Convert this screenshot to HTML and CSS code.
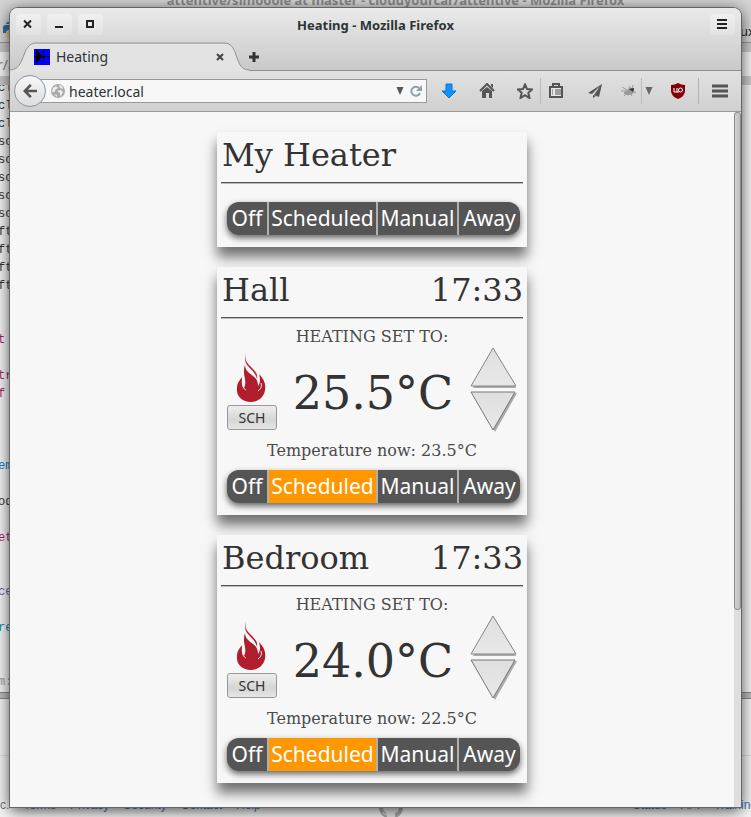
FILE: index.html
```html
<!DOCTYPE html>
<html lang="en">
<head>
<meta charset="utf-8">
<title>Heating</title>
<link rel="stylesheet" href="styles.css">
</head>
<body>
<svg class="defs" aria-hidden="true">
  <defs>
    <linearGradient id="tri" x1="0" y1="0" x2="0" y2="1"><stop offset="0" stop-color="#dfdfdf"/><stop offset="1" stop-color="#e8e8e8"/></linearGradient>
    <symbol id="flame" viewBox="0 0 30 49">
      <path fill="#b01e2e" d="M10 0C8 7 11 10 15 14C19 18 22 21 21 26C20 20 15 17 12 13C9 10 8 5 10 0Z"/>
      <path fill="#b01e2e" d="M9 12C9 17 13 20 17 23C21 26 22 29 22 33C25 29 24 25 23 21C28 26 30 31 29 37C28 45 21 49 15 49C6 49 0 43 1 35C1 30 4 27 6 24C6 29 5 32 8 35C11 29 8 24 8 20C8 17 8 14 9 12Z"/>
      <path fill="none" stroke="#f7f7f7" stroke-width="1" d="M7 29C6 34 8 36 10 37M25 30C26 33 25 36 22 38"/>
    </symbol>
    <symbol id="arrow-up" viewBox="0 0 48 41">
      <path d="M25 3L47 41H4Z" fill="#aaa"/><path d="M24 1L47 39H2Z" fill="url(#tri)" stroke="#858585"/>
    </symbol>
    <symbol id="arrow-down" viewBox="0 0 48 41">
      <path d="M4 2H48L26 41Z" fill="#aaa"/><path d="M2 1H46L24 39Z" fill="url(#tri)" stroke="#777"/>
    </symbol>
  </defs>
</svg>

<div class="backdrop" aria-hidden="true">
  <div class="back-title">attentive/simooole at master - cloudyourcar/attentive - Mozilla Firefox</div>
  <div class="back-tabs">
    <svg class="python" viewBox="0 0 16 16"><path fill="#3670a0" d="M4 0h7q2 0 2 2v6H6q-3 0-3 3H0V5q0-2 3-2h5V2H3z"/><path fill="#f2c63c" d="M16 5v6q0 2-3 2H8v3H6q-2 0-2-2v-3q0-2 2-2h7V5z"/></svg>
    <span>ux</span>
  </div>
  <div class="back-bar"><span>r/a</span></div>
  <div class="back-code">
    <pre>cl
cl
cl
sc
sc
sc
sc
sc
ft
ft
ft
ft


<b class="pink">t</b>

<b class="pink">tr</b>
<b class="pink">f</b>



<b class="blue">em</b>

od

<b class="pink">et</b>


<b class="violet">ce</b>

<b class="blue">re</b>


<b class="grey">m:</b></pre>
  </div>
  <div class="back-edge"></div>
  <div class="back-page"></div>
  <div class="back-footer">
    <div><span>c.</span><a>Terms</a><a>Privacy</a><a>Security</a><a>Contact</a><a>Help</a></div>
    <svg class="octo" viewBox="0 0 24 24"><circle cx="12" cy="12" r="12" fill="#aaa"/><path fill="#e6e6e6" d="M8 24v-4q-3 1-5-3 2 0 3 2l2-1q-4-1-4-6 0-2 1-3V5l4 2h6l4-2v4q1 1 1 3 0 5-4 6v6z"/></svg>
    <div><a>Status</a><a>API</a><a>Training</a></div>
  </div>
</div>

<div class="window">
  <header class="chrome">
    <div class="titlebar">
      <div class="controls">
        <button aria-label="Close"><svg viewBox="0 0 25 21"><path d="M8 6.500l7 7M15 6.500l-7 7" stroke="#222" stroke-width="2"/></svg></button>
        <button aria-label="Minimize"><svg viewBox="0 0 25 21"><path d="M8 13h8" stroke="#222" stroke-width="2"/></svg></button>
        <button aria-label="Maximize"><svg viewBox="0 0 25 21"><path d="M9 7h6v6H9z" fill="none" stroke="#222" stroke-width="2"/></svg></button>
      </div>
      <h1>Heating - Mozilla Firefox</h1>
      <div class="controls end">
        <button aria-label="Window menu"><svg viewBox="0 0 25 21"><path d="M7 6h10M7 10h10M7 14h10" stroke="#222" stroke-width="2"/></svg></button>
      </div>
    </div>
    <div class="tabs">
      <div class="tab">
        <svg class="tab-shape" viewBox="0 0 240 29"><path d="M0 28C16 28 11 1 26 1H215C231 1 224 28 240 28V29H0Z" fill="#e3e3e3"/><path d="M0 28C16 28 11 1 26 1H215C231 1 224 28 240 28" fill="none" stroke="#8e8e8e"/></svg>
        <svg class="favicon" viewBox="0 0 16 16"><path fill="#00f" d="M0 0h16v16H0z"/><path d="M2 1l7 6.500L2 14zM0 7h16v1H0zM9 2h1v11H9z"/></svg>
        <span>Heating</span>
        <button aria-label="Close tab"><svg viewBox="0 0 8 8"><path d="M1 1l6 6M7 1L1 7" stroke="#444" stroke-width="2"/></svg></button>
      </div>
      <button class="new-tab" aria-label="New tab"><svg viewBox="0 0 10 10"><path d="M5 0v10M0 5h10" stroke="#333" stroke-width="3"/></svg></button>
    </div>
  </header>
  <nav class="toolbar">
    <button class="back" aria-label="Back"><svg viewBox="0 0 16 16"><path d="M16 8H3M9 1L2 8l7 7" fill="none" stroke="#555" stroke-width="3"/></svg></button>
    <div class="urlbar">
      <svg class="i14" viewBox="0 0 14 14"><circle cx="7" cy="7" r="7" fill="#aaa"/><path fill="#eee" d="M2 4l3-2 2 2-3 2v2L1 8zM8 1l3 1 1 3-3-1zM6 7l4-1 2 2-2 4-1-1V9zM3 10l3 1v2z"/></svg>
      <input aria-label="Address" value="heater.local">
      <svg class="drop" viewBox="0 0 8 8"><path d="M.5 0h7L4 8z" fill="#555"/></svg>
      <svg class="i12" viewBox="0 0 12 12"><path d="M10 8A4.500 4.500 0 1 1 9 3" fill="none" stroke="#91a0ab" stroke-width="2"/><path d="M12 0v6H6z" fill="#91a0ab"/></svg>
    </div>
    <div class="tools">
      <button aria-label="Downloads"><svg viewBox="0 0 16 16"><path d="M5 1h6v7h4l-7 7-7-7h4z" fill="#1292ff" stroke="#0872d3"/></svg></button>
      <button aria-label="Home"><svg viewBox="0 0 16 16"><path d="M1 8l7-7 7 7" fill="none" stroke="#555" stroke-width="2"/><path d="M3 8l5-4 5 4v7h-3v-5H7v5H3zM12 1h2v4l-2-2z" fill="#555"/></svg></button>
      <button class="star" aria-label="Bookmark"><svg viewBox="0 0 16 16"><path d="M8 1.500l2 4.500 5 .5-3.700 3.300L12.500 15 8 12.200 3.500 15l1.200-5.200L1 6.500 6 6z" fill="none" stroke="#555" stroke-width="2"/></svg></button>
      <button class="list" aria-label="Bookmarks menu"><svg viewBox="0 0 16 16"><path d="M2 4h12v10H2z" fill="#e8e8e8" stroke="#555" stroke-width="2"/><path d="M5 3V1h6v2" fill="none" stroke="#555" stroke-width="2"/><path d="M4 7h1M7 7h6M4 9h1M7 9h6M4 11h1M7 11h6" stroke="#555"/></svg></button>
      <button class="plane" aria-label="Share"><svg viewBox="0 0 16 16"><path d="M15 1L1 10l4 1 8-8-6 9 5 2zM6 12v3l3-2z" fill="#555"/></svg></button>
      <button class="bug" aria-label="Firebug"><svg viewBox="0 0 16 16"><path d="M3 10l6-5 4 1-1 4-5 2zM1 4l5 3M0 8h5M3 13l4-4M8 3l2 4M12 2l-1 4M11 8l4 2M9 9l2 4" fill="#999" stroke="#999"/><path d="M8 6l5-1-1 4z" fill="#333"/></svg></button>
      <button class="bug-drop" aria-label="Firebug menu"><svg viewBox="0 0 8 8"><path d="M.5 0h7L4 8z" fill="#666"/></svg></button>
      <button class="shield" aria-label="uBlock"><svg viewBox="0 0 16 16"><path d="M8 0q3 2 7 2v6q0 5-7 8-7-3-7-8V2q4 0 7-2z" fill="#810007"/><path d="M4 5v4h3V5M7 9h2" fill="none" stroke="#fff"/><circle cx="10.500" cy="7" r="2" fill="none" stroke="#fff"/></svg></button>
      <button class="menu" aria-label="Open menu"><svg viewBox="0 0 16 16"><path d="M0 3h16M0 8h16M0 13h16" stroke="#555" stroke-width="3"/></svg></button>
    </div>
  </nav>

  <div class="viewport">
    <main>
      <section class="card">
        <h2>My Heater</h2>
        <div class="modes spaced"><button>Off</button><button>Scheduled</button><button>Manual</button><button>Away</button></div>
      </section>
      <section class="card">
        <h2>Hall <time>17:33</time></h2>
        <p class="label">HEATING SET TO:</p>
        <div class="setting">
          <div class="status"><svg viewBox="0 0 30 49"><use href="#flame"/></svg><button>SCH</button></div>
          <output>25.5°C</output>
          <div class="steps"><button aria-label="Warmer"><svg viewBox="0 0 48 41"><use href="#arrow-up"/></svg></button><button aria-label="Cooler"><svg viewBox="0 0 48 41"><use href="#arrow-down"/></svg></button></div>
        </div>
        <p class="now">Temperature now: 23.5°C</p>
        <div class="modes"><button>Off</button><button class="on">Scheduled</button><button>Manual</button><button>Away</button></div>
      </section>
      <section class="card">
        <h2>Bedroom <time>17:33</time></h2>
        <p class="label">HEATING SET TO:</p>
        <div class="setting">
          <div class="status"><svg viewBox="0 0 30 49"><use href="#flame"/></svg><button>SCH</button></div>
          <output>24.0°C</output>
          <div class="steps"><button aria-label="Warmer"><svg viewBox="0 0 48 41"><use href="#arrow-up"/></svg></button><button aria-label="Cooler"><svg viewBox="0 0 48 41"><use href="#arrow-down"/></svg></button></div>
        </div>
        <p class="now">Temperature now: 22.5°C</p>
        <div class="modes"><button>Off</button><button class="on">Scheduled</button><button>Manual</button><button>Away</button></div>
      </section>
    </main>
    <div class="scroll"><div class="thumb"></div></div>
  </div>
</div>
</body>
</html>
```
FILE: styles.css
```css
* { box-sizing: border-box; }
body {
  margin: 0;
  padding: 8px 10px 10px;
  min-height: 100vh;
  position: relative;
  display: flex;
  font-family: "Noto Sans", sans-serif;
  font-size: 13px;
  color: #2e3436;
}
button { border: 0; padding: 0; background: none; font: inherit; color: inherit; }
svg { display: block; }
h1, h2, p, pre { margin: 0; font-weight: normal; }
.defs { position: absolute; width: 0; height: 0; }

/* windows lying behind the browser */
.backdrop {
  position: absolute;
  inset: 0;
  overflow: hidden;
  display: flex;
  flex-direction: column;
  background: #f4f4f4;
}
.back-title { height: 16px; line-height: 0; flex: none; text-align: center; font-weight: bold; color: #888; background: #d4d4d4; padding-left: 40px; }
.back-tabs { height: 27px; flex: none; background: #d4d4d4; display: flex; justify-content: space-between; border-bottom: 1px solid #999; }
.python { width: 16px; height: 16px; margin: 6px 3px; }
.back-tabs span { width: 11px; line-height: 30px; color: #222; }
.back-bar { height: 42px; flex: none; background: #f4f4f4; border: solid #c9c9c9; border-width: 9px 0; line-height: 26px; color: #888; font-size: 14px; }
.back-bar span { margin-left: -3px; }
.back-code { height: 607px; flex: none; overflow: hidden; }
pre { font: 12px/18px "Liberation Mono", monospace; color: #333; margin-left: -2px; margin-top: -6px; }
pre b { font-weight: normal; }
.pink { color: #a71d5d; }
.blue { color: #0086b3; }
.violet { color: #795da3; }
.grey { color: #999; }
.back-edge { height: 7px; flex: none; background: #bbb; border: solid #888; border-width: 1px 0; }
.back-page { height: 57px; flex: none; border-bottom: 1px solid #ddd; }
.back-footer { display: flex; justify-content: space-between; padding-top: 39px; font: 12px/20px "Liberation Sans", sans-serif; color: #777; white-space: nowrap; }
.back-footer div { display: flex; gap: 14px; }
.back-footer div:last-child { margin-right: -6px; }
.back-footer a { color: #4078c0; }
.octo { width: 24px; height: 24px; margin-right: 112px; }

/* browser window */
.window {
  position: relative;
  flex: 1;
  display: flex;
  flex-direction: column;
  border-radius: 8px 8px 0 0;
  box-shadow: 0 0 0 1px #666, 0 3px 16px rgba(0, 0, 0, .75);
  background: #f7f7f7;
  overflow: hidden;
}
.chrome { background: linear-gradient(#eaeaea, #c9c9c9); border-bottom: 1px solid #8e8e8e; }
.titlebar { display: grid; grid-template-columns: 1fr auto 1fr; align-items: center; height: 33px; padding: 0 6px; }
.titlebar h1 { font-weight: bold; font-size: 13px; }
.controls { display: flex; gap: 6px; }
.end { justify-content: flex-end; }
.controls button { width: 25px; height: 21px; border-radius: 4px; background: linear-gradient(#f0f0f0, #e2e2e2); }
.tabs { display: flex; align-items: flex-end; height: 30px; margin-bottom: -1px; }
.tab { position: relative; display: flex; align-items: center; gap: 6px; width: 239px; height: 29px; padding: 0 25px 0 24px; font-size: 14px; }
.tab-shape { position: absolute; inset: 0; width: 100%; height: 29px; }
.tab > :not(.tab-shape) { position: relative; }
.favicon { width: 16px; height: 16px; }
.tab button { margin-left: auto; }
.tab button svg { width: 8px; height: 8px; }
.new-tab { height: 29px; }
.new-tab svg { width: 10px; height: 10px; }
.toolbar {
  display: flex;
  align-items: center;
  height: 41px;
  padding: 0 13px 0 4px;
  background: linear-gradient(#e1e1e1, #d0d0d0);
  border-bottom: 1px solid #999;
}
.back { flex: none; position: relative; z-index: 1; width: 32px; height: 32px; border: 1px solid #8797a5; border-radius: 50%; background: linear-gradient(#f7f7f7, #dedede); }
.back svg { width: 14px; height: 14px; margin: auto; }
.urlbar { flex: 1; min-width: 0; display: flex; align-items: center; gap: 4px; height: 24px; margin-left: -14px; padding: 0 4px 0 18px; background: #f7f7f7; border: 1px solid #999; }
.urlbar input { flex: 1; min-width: 0; border: 0; padding: 0; background: none; font: 14px "Noto Sans", sans-serif; color: #2e3436; }
.i14 { width: 14px; height: 14px; }
.drop { width: 8px; height: 8px; margin-right: 2px; }
.i12 { width: 12px; height: 12px; }
.tools { display: flex; align-items: center; margin-left: 14px; }
.tools button { height: 26px; display: grid; place-items: center; }
.tools svg { width: 16px; height: 16px; }
.tools .star { margin-left: 22px; }
.tools button:nth-child(2) { margin-left: 22px; }
.tools .list { margin-left: 7px; padding-left: 7px; border-left: 1px solid #b5bcc2; }
.tools .plane { margin-left: 23px; }
.tools .bug { margin-left: 18px; padding-right: 4px; border-right: 1px solid #bbb; }
.tools .bug-drop { margin-left: 3px; }
.tools .bug-drop svg { width: 8px; height: 8px; }
.tools .shield { margin-left: 17px; }
.tools .menu { margin-left: 12px; padding-left: 13px; border-left: 1px solid #aab2ba; }

.viewport { flex: 1; display: flex; }
main { flex: 1; display: flex; flex-direction: column; align-items: center; gap: 20px; padding: 20px 0; }
.scroll { width: 7px; background: #dedede; }
.thumb { height: 498px; border: 1px solid #8a8a8a; border-radius: 3px; background: linear-gradient(to right, #d2d2d2, #bdbdbd); }

/* heater cards */
.card {
  width: 310px;
  max-width: 100%;
  padding: 0 4px 12px;
  background: #f7f7f7;
  box-shadow: 0 10px 12px rgba(0, 0, 0, .55);
  font-family: "DejaVu Serif", serif;
  text-align: center;
  color: #333;
}
.card h2 { display: flex; justify-content: space-between; height: 51px; padding: 0 0 0 1px; line-height: 47px; font-size: 32px; border-bottom: 1px solid #555; box-shadow: 0 1px #bbb; }
.label, .now { font-size: 16px; color: #4a4a4a; }
.label { line-height: 24px; padding-top: 7px; height: 29px; }
.setting { display: flex; justify-content: space-between; align-items: flex-start; height: 85px; padding: 0 6px; }
.status { width: 50px; padding-top: 6px; }
.status svg { width: 30px; height: 49px; margin: 0 auto 3px 9px; }
.status button { width: 50px; height: 25px; font: 14px "Noto Sans", sans-serif; border: 1px solid #999; border-radius: 3px; background: linear-gradient(#eee, #d5d5d5 60%, #e5e5e5); }
.setting output { font-size: 46px; line-height: 92px; }
.steps { width: 48px; }
.steps svg { width: 48px; height: 41px; }
.now { line-height: 38px; }
.modes { display: grid; grid-template-columns: 40fr 107fr 79fr 61fr; gap: 2px; margin: 0 3px 0 6px; border-radius: 12px; background: #b0b0b0; box-shadow: 0 3px 6px rgba(0, 0, 0, .6); overflow: hidden; }
.spaced { margin-top: 19px; }
.modes button { height: 33px; font: 21px/33px "Noto Sans", sans-serif; color: #fff; background: #555; white-space: nowrap; }
.modes .on { background: #ff9800; }
```
